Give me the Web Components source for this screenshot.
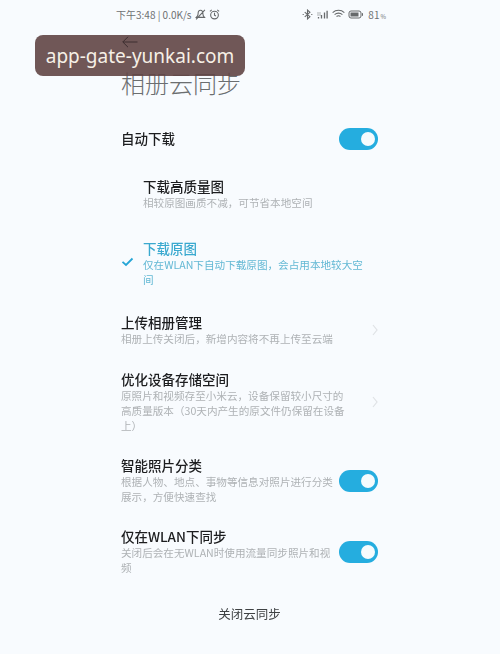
<!DOCTYPE html>
<html lang="zh-CN">
<head>
<meta charset="utf-8">
<title>相册云同步</title>
<style>
  html, body { margin: 0; height: 100%; }
  body { background: #f8fbfe; font-family: "Noto Sans CJK SC", "Noto Sans", sans-serif; }
</style>
</head>
<body>
<sync-page>
  <status-bar slot="status"></status-bar>
  <page-header slot="header" title="相册云同步"></page-header>

  <setting-row title="自动下载" toggle style="margin-bottom:28px"></setting-row>
  <option-row title="下载高质量图" desc="相较原图画质不减&#xFF0C;可节省本地空间" style="margin-bottom:30px"></option-row>
  <option-row title="下载原图" desc="仅在WLAN下自动下载原图&#xFF0C;会占用本地较大空间" checked style="margin-bottom:27px"></option-row>
  <setting-row title="上传相册管理" desc="相册上传关闭后&#xFF0C;新增内容将不再上传至云端" arrow style="margin-bottom:25px"></setting-row>
  <setting-row title="优化设备存储空间" desc="原照片和视频存至小米云&#xFF0C;设备保留较小尺寸的高质量版本&#xFF08;30天内产生的原文件仍保留在设备上&#xFF09;" arrow style="margin-bottom:24px"></setting-row>
  <setting-row title="智能照片分类" desc="根据人物、地点、事物等信息对照片进行分类展示&#xFF0C;方便快速查找" toggle style="margin-bottom:24px"></setting-row>
  <setting-row title="仅在WLAN下同步" desc="关闭后会在无WLAN时使用流量同步照片和视频" toggle></setting-row>

  <div slot="footer">关闭云同步</div>
  <watermark-tag slot="overlay">app-gate-yunkai.com</watermark-tag>
</sync-page>

<script>
const FONT = '"Noto Sans CJK SC", "Noto Sans", sans-serif';

class SyncPage extends HTMLElement {
  constructor () {
    super();
    this.attachShadow({ mode: 'open' });
    this.shadowRoot.innerHTML = `
      <style>
        :host { display: block; position: relative; width: 500px; height: 654px; overflow: hidden;
          background: #f8fbfe; font-family: ${ FONT }; }
        main { display: flex; flex-direction: column; padding: 0 122px 0 121px; filter: blur(.35px); }
        footer { margin-top: 30px; text-align: center; font-size: 12.5px; line-height: 18px; color: #3f4244; }
      </style>
      <slot name="status"></slot>
      <slot name="header"></slot>
      <main><slot></slot>
        <footer><slot name="footer"></slot></footer>
      </main>
      <slot name="overlay"></slot>
    `;
  }
}

class StatusBar extends HTMLElement {
  constructor () {
    super();
    this.attachShadow({ mode: 'open' });
    this.shadowRoot.innerHTML = `
      <style>
        :host { display: flex; justify-content: space-between; align-items: center; height: 14px;
          padding: 7px 114px 0 116px; font-size: 10px; color: #6d7072; }
        div { display: flex; align-items: center; gap: 3px; white-space: nowrap; }
        svg { display: block; fill: none; stroke: #66696b; stroke-width: 1; }
        small { font-size: 6px; margin-left: 1px; }
      </style>
      <div>下午3:48 | 0.0K/s
        <svg width="11" height="11" viewBox="0 0 10 10"><path d="M5 1.2C3.2 1.2 2.8 2.8 2.8 4.5 2.8 6 2 6.8 1.2 7.6H8.6C7.8 6.8 7.2 6 7.2 4.5 7.2 2.8 6.8 1.2 5 1.2ZM1 9.5 9 .8"/></svg>
        <svg width="11" height="11" viewBox="0 0 10 10"><circle cx="5" cy="5.5" r="3.5"/><path d="M5 3.5V5.6L6.3 6.4M.8 2.2 2.5.8M9.2 2.2 7.5.8"/></svg>
      </div>
      <div>
        <svg width="11" height="11" viewBox="0 0 10 10"><path d="M2.5 2.8 7.2 7 5 9V1L7.2 3 2.5 7.2"/><path d="M.6 5H1.6M8.4 5H9.4"/></svg>
        <svg width="13" height="9" viewBox="0 0 12 9"><path stroke-dasharray="1 1" d="M1 3H4M1 5H4"/><path stroke-width="1.3" d="M2 8.5V7M5 8.5V5M8 8.5V2.5M10.6 8.5V.8"/></svg>
        <svg width="13" height="10" viewBox="0 0 12 9"><path d="M.6 3.2C3.6.4 8.4.4 11.4 3.2M2.4 5C4.4 3.3 7.6 3.3 9.6 5M4.2 6.8C5.2 6 6.8 6 7.8 6.8"/></svg>
        <svg width="17" height="9" viewBox="0 0 16 9"><rect x=".5" y="1" width="12" height="7" rx="2"/><rect x="2" y="2.5" width="8" height="4" fill="#66696b" stroke="none"/><path d="M14 3.2V5.8"/></svg>
        <span>81<small>%</small></span>
      </div>
    `;
  }
}

class PageHeader extends HTMLElement {
  constructor () {
    super();
    this.attachShadow({ mode: 'open' });
    this.shadowRoot.innerHTML = `
      <style>
        :host { display: block; padding: 15px 0 0 121px; height: 106px; box-sizing: border-box; }
        /* the back arrow shows through the watermark */
        svg { display: block; position: relative; z-index: 1; margin-left: 1px; fill: none; stroke: #3c2e30; stroke-width: 1; }
        h1 { margin: 18px 0 0; font-size: 24px; line-height: 34px; font-weight: 300; color: #6b6e70; }
      </style>
      <svg width="16" height="12" viewBox="0 0 16 12"><path d="M15.5 6H.8M6 .8.8 6 6 11.2"/></svg>
      <h1></h1>
    `;
    this.shadowRoot.querySelector('h1').textContent = this.getAttribute('title');
  }
}

class ToggleSwitch extends HTMLElement {
  constructor () {
    super();
    this.attachShadow({ mode: 'open' });
    this.shadowRoot.innerHTML = `
      <style>
        :host { display: flex; justify-content: flex-end; align-items: center; box-sizing: border-box;
          width: 39px; height: 22px; margin-top: 1px; padding-right: 3px; border-radius: 11px; background: #25addf; flex: none; }
        i { width: 14px; height: 14px; border-radius: 50%; background: #f5fbfd; }
      </style>
      <i></i>
    `;
  }
}

class SettingRow extends HTMLElement {
  constructor () {
    super();
    this.attachShadow({ mode: 'open' });
    this.shadowRoot.innerHTML = `
      <style>
        :host { display: flex; align-items: center; gap: 5px; }
        .text { flex: 1; min-width: 0; }
        :host([arrow]) .text { padding-right: 20px; }
        .title { font-size: 13.5px; line-height: 17px; font-weight: 500; color: #1c1d1f; }
        .desc { font-size: 10.6px; line-height: 15px; color: #aeb2b5; }
        svg { flex: none; margin-left: auto; fill: none; stroke: #dfe2e5; stroke-width: 1.2; }
      </style>
      <div class="text"><div class="title"></div></div>
    `;
    const text = this.shadowRoot.querySelector('.text');
    text.querySelector('.title').textContent = this.getAttribute('title');
    if (this.hasAttribute('desc')) {
      const d = document.createElement('div');
      d.className = 'desc';
      d.textContent = this.getAttribute('desc');
      text.appendChild(d);
    }
    if (this.hasAttribute('toggle')) {
      this.shadowRoot.appendChild(document.createElement('toggle-switch'));
    }
    if (this.hasAttribute('arrow')) {
      const wrap = document.createElement('template');
      wrap.innerHTML = '<svg width="6" height="12" viewBox="0 0 6 12"><path d="M1 1 5 6 1 11"/></svg>';
      this.shadowRoot.appendChild(wrap.content);
    }
  }
}

class OptionRow extends HTMLElement {
  constructor () {
    super();
    this.attachShadow({ mode: 'open' });
    this.shadowRoot.innerHTML = `
      <style>
        :host { display: grid; grid-template-columns: 22px 1fr; align-items: center; }
        .body { padding-right: 5px; }
        .title { font-size: 13.5px; line-height: 17px; font-weight: 500; color: #1c1d1f; }
        .desc { font-size: 10.6px; line-height: 15px; color: #aeb2b5; }
        :host([checked]) .title { color: #3aa9cf; }
        :host([checked]) .desc { color: #62b8d4; }
        .mark { display: block; }
        svg { display: block; margin-bottom: 3px; fill: none; stroke: #25a5d6; stroke-width: 1.8; }
      </style>
      <span class="mark"></span>
      <div class="body"><div class="title"></div><div class="desc"></div></div>
    `;
    this.shadowRoot.querySelector('.title').textContent = this.getAttribute('title');
    this.shadowRoot.querySelector('.desc').textContent = this.getAttribute('desc');
    if (this.hasAttribute('checked')) {
      this.shadowRoot.querySelector('.mark').innerHTML =
        '<svg width="13" height="10" viewBox="0 0 13 10"><path d="M1.5 4.8 5 8 11.5 1.5"/></svg>';
    }
  }
}

class WatermarkTag extends HTMLElement {
  constructor () {
    super();
    this.attachShadow({ mode: 'open' });
    this.shadowRoot.innerHTML = `
      <style>
        :host { position: absolute; left: 35px; top: 35px; width: 210px; height: 41px; box-sizing: border-box;
          display: flex; align-items: center; justify-content: center; border-radius: 8px;
          background: rgba(96, 69, 69, 0.9); color: #f6f0e6; font: 19px "Noto Sans", sans-serif; white-space: nowrap; }
      </style>
      <slot></slot>
    `;
  }
}

customElements.define('toggle-switch', ToggleSwitch);
customElements.define('status-bar', StatusBar);
customElements.define('page-header', PageHeader);
customElements.define('setting-row', SettingRow);
customElements.define('option-row', OptionRow);
customElements.define('watermark-tag', WatermarkTag);
customElements.define('sync-page', SyncPage);
</script>
</body>
</html>
